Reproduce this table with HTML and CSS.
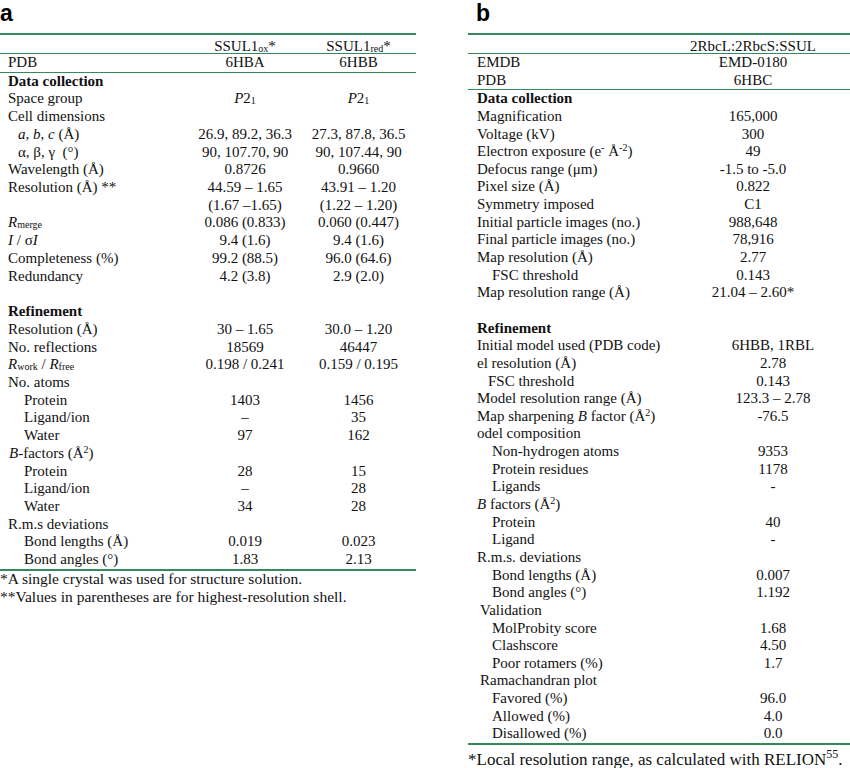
FILE: index.html
```html
<!DOCTYPE html>
<html>
<head>
<meta charset="utf-8">
<title>Tables</title>
<link rel="stylesheet" href="styles.css">
</head>
<body>
<div class="figure">
  <section class="panel panel-a">
    <div class="panel-label">a</div>
    <div class="tbl tbl-a">
      <div class="row head sep"><span></span><span class="c">SSUL1<sub>ox</sub>*</span><span class="c">SSUL1<sub>red</sub>*</span></div>
      <div class="row sep"><span class="l">PDB</span><span class="c">6HBA</span><span class="c">6HBB</span></div>
      <div class="row"><span class="l b">Data collection</span></div>
      <div class="row"><span class="l">Space group</span><span class="c"><i>P</i>2<sub>1</sub></span><span class="c"><i>P</i>2<sub>1</sub></span></div>
      <div class="row"><span class="l">Cell dimensions</span></div>
      <div class="row"><span class="l i1"><i>a</i>, <i>b</i>, <i>c</i> (Å)</span><span class="c">26.9, 89.2, 36.3</span><span class="c">27.3, 87.8, 36.5</span></div>
      <div class="row"><span class="l i1">α, β, γ &nbsp;(°)</span><span class="c">90, 107.70, 90</span><span class="c">90, 107.44, 90</span></div>
      <div class="row"><span class="l">Wavelength (Å)</span><span class="c">0.8726</span><span class="c">0.9660</span></div>
      <div class="row"><span class="l">Resolution (Å) **</span><span class="c">44.59 – 1.65</span><span class="c">43.91 – 1.20</span></div>
      <div class="row"><span class="l"></span><span class="c">(1.67 –1.65)</span><span class="c">(1.22 – 1.20)</span></div>
      <div class="row"><span class="l"><i>R</i><sub>merge</sub></span><span class="c">0.086 (0.833)</span><span class="c">0.060 (0.447)</span></div>
      <div class="row"><span class="l"><i>I</i> / σ<i>I</i></span><span class="c">9.4 (1.6)</span><span class="c">9.4 (1.6)</span></div>
      <div class="row"><span class="l">Completeness (%)</span><span class="c">99.2 (88.5)</span><span class="c">96.0 (64.6)</span></div>
      <div class="row"><span class="l">Redundancy</span><span class="c">4.2 (3.8)</span><span class="c">2.9 (2.0)</span></div>
      <div class="row"><span class="l"></span></div>
      <div class="row"><span class="l b">Refinement</span></div>
      <div class="row"><span class="l">Resolution (Å)</span><span class="c">30 – 1.65</span><span class="c">30.0 – 1.20</span></div>
      <div class="row"><span class="l">No. reflections</span><span class="c">18569</span><span class="c">46447</span></div>
      <div class="row"><span class="l"><i>R</i><sub>work</sub> / <i>R</i><sub>free</sub></span><span class="c">0.198 / 0.241</span><span class="c">0.159 / 0.195</span></div>
      <div class="row"><span class="l">No. atoms</span></div>
      <div class="row"><span class="l i2">Protein</span><span class="c">1403</span><span class="c">1456</span></div>
      <div class="row"><span class="l i2">Ligand/ion</span><span class="c">–</span><span class="c">35</span></div>
      <div class="row"><span class="l i2">Water</span><span class="c">97</span><span class="c">162</span></div>
      <div class="row"><span class="l i0"><i>B</i>-factors (Å<sup>2</sup>)</span></div>
      <div class="row"><span class="l i2">Protein</span><span class="c">28</span><span class="c">15</span></div>
      <div class="row"><span class="l i2">Ligand/ion</span><span class="c">–</span><span class="c">28</span></div>
      <div class="row"><span class="l i2">Water</span><span class="c">34</span><span class="c">28</span></div>
      <div class="row"><span class="l">R.m.s deviations</span></div>
      <div class="row"><span class="l i2">Bond lengths (Å)</span><span class="c">0.019</span><span class="c">0.023</span></div>
      <div class="row"><span class="l i2">Bond angles (°)</span><span class="c">1.83</span><span class="c">2.13</span></div>
    </div>
    <div class="notes notes-a">
      <p>*A single crystal was used for structure solution.</p>
      <p>**Values in parentheses are for highest-resolution shell.</p>
    </div>
  </section>

  <section class="panel panel-b">
    <div class="panel-label">b</div>
    <div class="tbl tbl-b">
      <div class="row head sep"><span></span><span class="c">2RbcL:2RbcS:SSUL</span></div>
      <div class="row"><span class="l">EMDB</span><span class="c">EMD-0180</span></div>
      <div class="row sep"><span class="l">PDB</span><span class="c">6HBC</span></div>
      <div class="row"><span class="l b">Data collection</span></div>
      <div class="row"><span class="l">Magnification</span><span class="c">165,000</span></div>
      <div class="row"><span class="l">Voltage (kV)</span><span class="c">300</span></div>
      <div class="row"><span class="l">Electron exposure (e<sup>-</sup> Å<sup>-2</sup>)</span><span class="c">49</span></div>
      <div class="row"><span class="l">Defocus range (μm)</span><span class="c">-1.5 to -5.0</span></div>
      <div class="row"><span class="l">Pixel size (Å)</span><span class="c">0.822</span></div>
      <div class="row"><span class="l">Symmetry imposed</span><span class="c">C1</span></div>
      <div class="row"><span class="l">Initial particle images (no.)</span><span class="c">988,648</span></div>
      <div class="row"><span class="l">Final particle images (no.)</span><span class="c">78,916</span></div>
      <div class="row"><span class="l">Map resolution (Å)</span><span class="c">2.77</span></div>
      <div class="row"><span class="l i3">FSC threshold</span><span class="c">0.143</span></div>
      <div class="row"><span class="l">Map resolution range (Å)</span><span class="c">21.04 – 2.60*</span></div>
      <div class="row"><span class="l"></span></div>
      <div class="row"><span class="l b">Refinement</span></div>
      <div class="row"><span class="l">Initial model used (PDB code)</span><span class="c r">6HBB, 1RBL</span></div>
      <div class="row"><span class="l">el resolution (Å)</span><span class="c r">2.78</span></div>
      <div class="row"><span class="l i1b">FSC threshold</span><span class="c r">0.143</span></div>
      <div class="row"><span class="l">Model resolution range (Å)</span><span class="c r">123.3 – 2.78</span></div>
      <div class="row"><span class="l">Map sharpening <i>B</i> factor (Å<sup>2</sup>)</span><span class="c r">-76.5</span></div>
      <div class="row"><span class="l">odel composition</span></div>
      <div class="row"><span class="l i3">Non-hydrogen atoms</span><span class="c r">9353</span></div>
      <div class="row"><span class="l i3">Protein residues</span><span class="c r">1178</span></div>
      <div class="row"><span class="l i3">Ligands</span><span class="c r">-</span></div>
      <div class="row"><span class="l"><i>B</i> factors (Å<sup>2</sup>)</span></div>
      <div class="row"><span class="l i3">Protein</span><span class="c r">40</span></div>
      <div class="row"><span class="l i3">Ligand</span><span class="c r">-</span></div>
      <div class="row"><span class="l">R.m.s. deviations</span></div>
      <div class="row"><span class="l i3">Bond lengths (Å)</span><span class="c r">0.007</span></div>
      <div class="row"><span class="l i3">Bond angles (°)</span><span class="c r">1.192</span></div>
      <div class="row"><span class="l i4">Validation</span></div>
      <div class="row"><span class="l i3">MolProbity score</span><span class="c r">1.68</span></div>
      <div class="row"><span class="l i3">Clashscore</span><span class="c r">4.50</span></div>
      <div class="row"><span class="l i3">Poor rotamers (%)</span><span class="c r">1.7</span></div>
      <div class="row"><span class="l i4">Ramachandran plot</span></div>
      <div class="row"><span class="l i3">Favored (%)</span><span class="c r">96.0</span></div>
      <div class="row"><span class="l i3">Allowed (%)</span><span class="c r">4.0</span></div>
      <div class="row"><span class="l i3">Disallowed (%)</span><span class="c r">0.0</span></div>
    </div>
    <div class="notes notes-b">
      <p>*Local resolution range, as calculated with RELION<sup class="ref">55</sup>.</p>
    </div>
  </section>
</div>
</body>
</html>
```

FILE: styles.css
```css
html, body {
  margin: 0;
  padding: 0;
  background: #ffffff;
}

body {
  color: #111111;
  font-family: "Liberation Serif", "Times New Roman", serif;
  font-size: 15px;
}

.figure {
  display: flex;
  align-items: flex-start;
  width: 850px;
}

.panel-a {
  width: 416px;
  flex: none;
}

.panel-b {
  width: 382px;
  margin-left: 52px;
  flex: none;
}

.panel-label {
  font-family: "Liberation Sans", Arial, sans-serif;
  font-weight: bold;
  font-size: 23px;
  line-height: 26px;
  height: 33px;
  color: #000;
}

.panel-b .panel-label {
  padding-left: 8px;
}

.tbl {
  border-top: 2px solid #35895a;
  border-bottom: 2px solid #35895a;
}

.row {
  display: grid;
  height: 17.72px;
  line-height: 17.72px;
  white-space: nowrap;
}

.tbl-a .row {
  grid-template-columns: 189px 112px 115px;
}

.tbl-b .row {
  grid-template-columns: 188px 194px;
  height: 17.65px;
  line-height: 17.65px;
}

.tbl .row.head {
  height: 19px;
  box-sizing: border-box;
  padding-top: 3px;
}

.row.sep {
  border-bottom: 1.5px solid #35895a;
}

.l {
  padding-left: 8px;
}

.tbl-b .l {
  padding-left: 9px;
}

.c {
  text-align: center;
}

.c.r {
  padding-left: 40px;
}

.b {
  font-weight: bold;
}

.tbl-a .l.i1 { padding-left: 18px; }
.tbl-a .l.i2 { padding-left: 24px; }
.tbl-a .l.i0 { padding-left: 9px; }
.tbl-b .l.i3 { padding-left: 24px; }
.tbl-b .l.i1b { padding-left: 20px; }
.tbl-b .l.i4 { padding-left: 12px; }

sub {
  font-size: 10px;
  line-height: 0;
  vertical-align: -1px;
}

sup {
  font-size: 10px;
  line-height: 0;
  vertical-align: 5px;
}

sup.ref {
  font-size: 12px;
  vertical-align: 7px;
}

.notes p {
  margin: 0;
  line-height: 18px;
  white-space: nowrap;
}

.notes-a {
  margin-top: -1px;
  font-size: 15.5px;
}

.notes-b {
  margin-top: 6px;
  font-size: 17px;
}
```
